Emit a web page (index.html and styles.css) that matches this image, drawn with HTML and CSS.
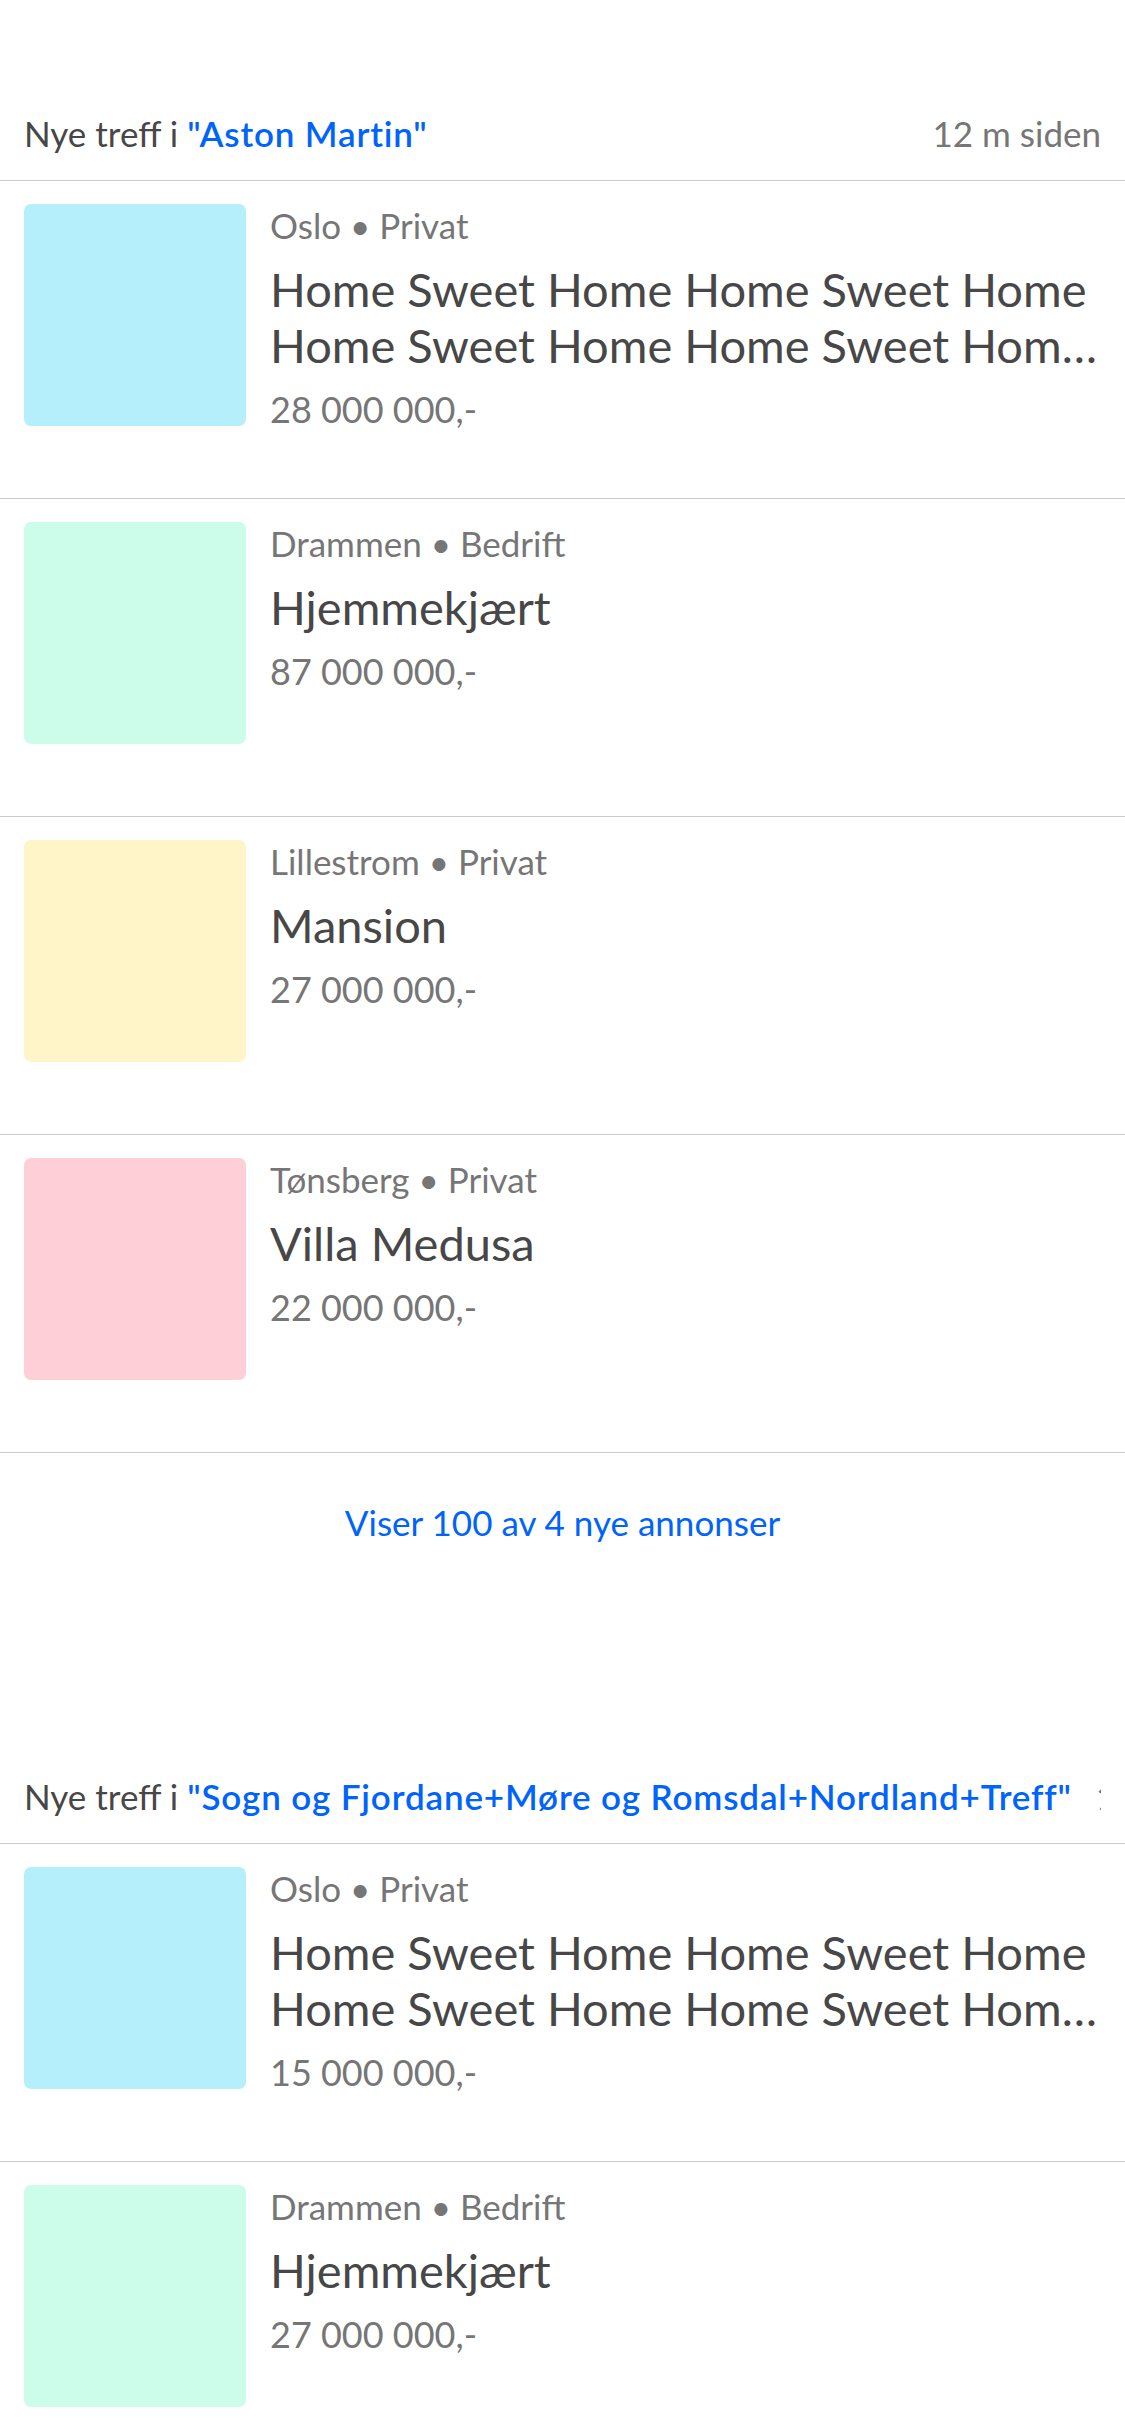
FILE: index.html
```html
<!DOCTYPE html>
<html lang="no">
<head>
<meta charset="utf-8">
<title>Nye treff</title>
<link rel="stylesheet" href="styles.css">
</head>
<body>
<main class="page">
  <section class="search">
    <header class="search-head">
      <div class="head-inner">
        <span class="head-title">Nye treff i <span class="query">"Aston Martin"</span></span>
        <span class="head-time">12 m siden</span>
      </div>
    </header>
    <ul class="listings">
      <li class="listing">
        <div class="thumb thumb-blue"></div>
        <div class="info">
          <div class="meta">Oslo • Privat</div>
          <div class="title">Home Sweet Home Home Sweet Home Home Sweet Home Home Sweet Home Home Sweet Home</div>
          <div class="price">28 000 000,-</div>
        </div>
      </li>
      <li class="listing">
        <div class="thumb thumb-mint"></div>
        <div class="info">
          <div class="meta">Drammen • Bedrift</div>
          <div class="title">Hjemmekjært</div>
          <div class="price">87 000 000,-</div>
        </div>
      </li>
      <li class="listing">
        <div class="thumb thumb-yellow"></div>
        <div class="info">
          <div class="meta">Lillestrom • Privat</div>
          <div class="title">Mansion</div>
          <div class="price">27 000 000,-</div>
        </div>
      </li>
      <li class="listing">
        <div class="thumb thumb-pink"></div>
        <div class="info">
          <div class="meta">Tønsberg • Privat</div>
          <div class="title">Villa Medusa</div>
          <div class="price">22 000 000,-</div>
        </div>
      </li>
    </ul>
    <div class="more">Viser 100 av 4 nye annonser</div>
  </section>

  <section class="search">
    <header class="search-head">
      <div class="head-inner">
        <span class="head-title">Nye treff i <span class="query">"Sogn og Fjordane+Møre og Romsdal+Nordland+Treff"</span></span>
        <span class="head-time">12 m siden</span>
      </div>
    </header>
    <ul class="listings">
      <li class="listing">
        <div class="thumb thumb-blue"></div>
        <div class="info">
          <div class="meta">Oslo • Privat</div>
          <div class="title">Home Sweet Home Home Sweet Home Home Sweet Home Home Sweet Home Home Sweet Home</div>
          <div class="price">15 000 000,-</div>
        </div>
      </li>
      <li class="listing">
        <div class="thumb thumb-mint"></div>
        <div class="info">
          <div class="meta">Drammen • Bedrift</div>
          <div class="title">Hjemmekjært</div>
          <div class="price">27 000 000,-</div>
        </div>
      </li>
    </ul>
  </section>
</main>
</body>
</html>
```

FILE: styles.css
```css
* {
  box-sizing: border-box;
}

html, body {
  margin: 0;
  padding: 0;
  background: #ffffff;
}

body {
  width: 1125px;
  height: 2436px;
  overflow: hidden;
  font-family: "Lato", "Open Sans", "Noto Sans", sans-serif;
  color: #474747;
}

.page {
  display: flex;
  flex-direction: column;
}

.search {
  display: flex;
  flex-direction: column;
}

.search-head {
  height: 181px;
  display: flex;
  align-items: flex-end;
  padding: 0 24px 27px;
  border-bottom: 1px solid #cacaca;
}

.head-inner {
  flex: 1;
  min-width: 0;
  display: flex;
  justify-content: space-between;
  gap: 24px;
  overflow: hidden;
  font-size: 35px;
  line-height: 40px;
  white-space: nowrap;
}

.head-title {
  flex: none;
  color: #474747;
}

.query {
  color: #0063fb;
  font-weight: 600;
  letter-spacing: 0.85px;
}

.head-time {
  flex: none;
  color: #767676;
}

.listings {
  list-style: none;
  margin: 0;
  padding: 0;
}

.listing {
  height: 318px;
  display: flex;
  gap: 24px;
  padding: 23px 24px 0;
  border-bottom: 1px solid #cacaca;
}

.thumb {
  flex: none;
  width: 222px;
  height: 222px;
  border-radius: 7px;
}

.thumb-blue { background: #b5effc; }
.thumb-mint { background: #ccfcea; }
.thumb-yellow { background: #fff5c9; }
.thumb-pink { background: #ffcfd8; }

.info {
  flex: 1;
  min-width: 0;
  display: flex;
  flex-direction: column;
}

.meta {
  font-size: 35px;
  line-height: 42px;
  color: #767676;
  white-space: nowrap;
}

.title {
  margin-top: 15px;
  font-size: 47px;
  line-height: 56px;
  color: #474747;
  display: -webkit-box;
  -webkit-box-orient: vertical;
  -webkit-line-clamp: 2;
  overflow: hidden;
}

.price {
  margin-top: 15px;
  font-size: 36px;
  line-height: 42px;
  color: #767676;
}

.more {
  padding: 49px 24px 121px;
  text-align: center;
  font-size: 35px;
  line-height: 40px;
  color: #0063fb;
}
```
